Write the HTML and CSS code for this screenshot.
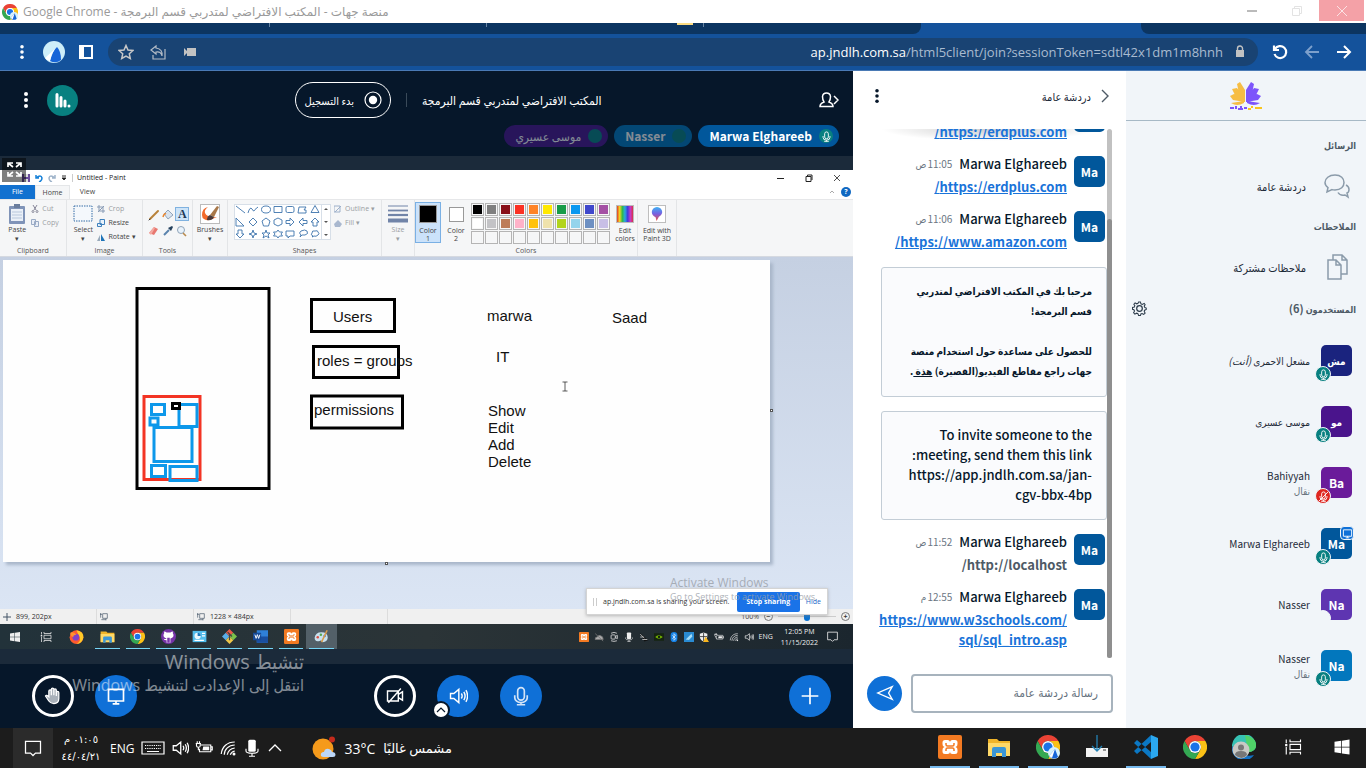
FILE: index.html
```html
<!DOCTYPE html>
<html lang="ar">
<head>
<meta charset="utf-8">
<title>منصة جهات - المكتب الافتراضي لمتدربي قسم البرمجة</title>
<link rel="stylesheet" href="styles.css">
</head>
<body>
<svg class="defs" aria-hidden="true">
  <symbol id="chrome" viewBox="0 0 24 24"><path fill="#ea4335" d="M1.6 6A12 12 0 0 1 22.4 6H12a6 6 0 0 0-5.2 9z"/><path fill="#fbc116" d="M22.4 6A12 12 0 0 1 12 24l5.2-9A6 6 0 0 0 12 6z"/><path fill="#34a853" d="M12 24A12 12 0 0 1 1.6 6l5.2 9a6 6 0 0 0 10.4 0z"/><circle cx="12" cy="12" r="6" fill="#fff"/><circle cx="12" cy="12" r="4.600" fill="#1a73e8"/></symbol>
  <symbol id="chrome-profile" viewBox="0 0 24 24"><use href="#chrome"/><circle cx="18" cy="18" r="6" fill="#d7f1fb"/><path d="M13 21l6-7 3 8a6 6 0 0 1-8 0z" fill="#1765d8"/><path d="M13 21l6-7-3 9z" fill="#fff"/></symbol>
  <symbol id="xampp" viewBox="0 0 24 24"><rect width="24" height="24" rx="2" fill="#f37a22"/><path d="M7 5h2.500a2.500 2.500 0 0 1 2.500 2.500A2.500 2.500 0 0 1 14.500 5H17a2.500 2.500 0 0 1 2.500 2.500V9a3 3 0 0 1-2 3 3 3 0 0 1 2 3v1.500A2.500 2.500 0 0 1 17 19h-2.500a2.500 2.500 0 0 1-2.500-2.500A2.500 2.500 0 0 1 9.500 19H7a2.500 2.500 0 0 1-2.500-2.500V15a3 3 0 0 1 2-3 3 3 0 0 1-2-3V7.500A2.500 2.500 0 0 1 7 5z" fill="#fff"/><path d="M8 8v1.500q0 1.500 1.500 1.500h5Q16 11 16 9.500V8M8 16v-1.500Q8 13 9.500 13h5q1.500 0 1.500 1.500V16" stroke="#f37a22" stroke-width="1.500" fill="none"/></symbol>
  <symbol id="folder" viewBox="0 0 24 24"><path d="M1 4h9l2 2h11v15H1z" fill="#f0b429"/><path d="M1 8h22v13H1z" fill="#ffd968"/><path d="M5 22v-8q0-2 2-2h10q2 0 2 2v8h-4v-4H9v4z" fill="#3b96d6"/></symbol>
  <symbol id="windows" viewBox="0 0 24 24"><path fill="currentColor" d="M2 5l9-1.300v7.800H2zM12 3.600L22 2v9.500H12zM2 12.500h9v7.800L2 19zM12 12.500h10V22l-10-1.500z"/></symbol>
  <symbol id="taskview" viewBox="0 0 24 24"><g fill="none" stroke="currentColor" stroke-width="1.500"><path d="M8 2v3h14V2M8 22v-3h14v3M8 8.500h14v7H8zM3 2v5M3 12v10"/><path d="M1.500 9.500h3" stroke-width="3"/></g></symbol>
  <symbol id="note" viewBox="0 0 24 24"><path d="M3 4h18v14h-6l-3 3-3-3H3z" fill="none" stroke="currentColor" stroke-width="1.500"/></symbol>
  <symbol id="wifi" viewBox="0 0 24 24"><g fill="none" stroke="currentColor" stroke-width="1.600"><path d="M3 20C4 10 11 4 21 4M7 21c0-7 6-13 14-13M11 21c1-5 4-8 10-9M15 21c1-3 2-4 6-5"/></g><circle cx="20" cy="20" r="2" fill="currentColor"/></symbol>
  <symbol id="speaker" viewBox="0 0 24 24"><path d="M3 9h4l6-5v16l-6-5H3zM16 9q2 3 0 6M19 7q3 5 0 10M21.500 5q4 7 0 14" fill="none" stroke="currentColor" stroke-width="1.700"/></symbol>
  <symbol id="mic" viewBox="0 0 24 24"><g fill="none" stroke="currentColor" stroke-width="2"><rect x="8" y="2" width="8" height="15" rx="4"/><path d="M4.500 11v3a7.500 6 0 0 0 15 0v-3M12 20v2.500M7 22.500h10"/></g></symbol>
  <symbol id="mic-solid" viewBox="0 0 24 24"><rect x="7" y="1" width="10" height="16" rx="2" fill="currentColor"/><path d="M4 13v3q0 3 8 3t8-3v-3M12 19v4M8 23h8" fill="none" stroke="currentColor" stroke-width="1.500"/></symbol>
  <symbol id="dots" viewBox="0 0 6 18"><g fill="currentColor"><circle cx="3" cy="3" r="2"/><circle cx="3" cy="9" r="2"/><circle cx="3" cy="15" r="2"/></g></symbol>
  <symbol id="battery" viewBox="0 0 24 24"><path d="M8 8h13v9H6v-4M21 10.500h2v4h-2" fill="none" stroke="currentColor" stroke-width="1.500"/><path d="M11 10h8v5h-9z" fill="currentColor"/><path d="M1 6h7M2 6v3q0 2 2.500 2T7 9V6M3 3v3M6 3v3M4.500 11v4" fill="none" stroke="currentColor" stroke-width="1.500"/></symbol>
  <symbol id="screen" viewBox="0 0 24 24"><path d="M3 4h18v14H3zM8 21.500h8M12 18v3" fill="none" stroke="currentColor" stroke-width="2"/></symbol>
  <symbol id="size" viewBox="0 0 12 12"><path d="M4 1h7v7H4zM0 2h3M1 0v7M2 10h7M9 8v3" fill="none" stroke="#456" stroke-width="1"/></symbol>
</svg>

<header class="titlebar">
  <svg class="i16"><use href="#chrome-profile"/></svg>
  <span class="window-name" dir="rtl">منصة جهات - المكتب الافتراضي لمتدربي قسم البرمجة - Google Chrome</span>
  <button class="win-btn" aria-label="Minimize"><svg viewBox="0 0 10 10"><path d="M0 5h10" stroke="#777"/></svg></button>
  <button class="win-btn" aria-label="Restore"><svg viewBox="0 0 10 10"><path d="M.5 2.500h7v7h-7zM2.500 2V.5h7v7H8" fill="none" stroke="#e3e3e3"/></svg></button>
  <button class="win-btn close" aria-label="Close"><svg viewBox="0 0 10 10"><path d="M0 0l10 10M10 0L0 10" stroke="#fbe3e5"/></svg></button>
</header>
<div class="tabstrip"><div class="tabs-left"><i></i><i></i><i></i></div><div class="tabs-right"></div></div>
<nav class="addressbar">
  <button aria-label="Menu" class="bar-btn"><svg class="i16"><use href="#dots"/></svg></button>
  <button aria-label="Profile" class="bar-btn"><svg class="i22" viewBox="0 0 22 22"><circle cx="11" cy="11" r="11" fill="#cdeef9"/><path d="M7 20Q10 9 14 6q4 4 4 13-5 4-11 1z" fill="#1765d8"/><path d="M2 17L14 6Q9 10 7 20q-4-1-5-3z" fill="#fff"/></svg></button>
  <button aria-label="Side panel" class="bar-btn"><svg class="i16" viewBox="0 0 16 16"><path d="M1 1h14v14H1zM6 3v10h7V3z" fill="#fff" fill-rule="evenodd"/></svg></button>
  <div class="omnibox">
    <svg class="i16" viewBox="0 0 16 16"><path d="M8 1.500l2 4.500 5 .5-3.700 3.300 1 4.700L8 12l-4.300 2.500 1-4.700L1 6.500 6 6z" fill="none" stroke="#c8c8c8" stroke-width="1.500"/></svg>
    <svg class="i16" viewBox="0 0 16 16"><path d="M6 2L1 6l5 4V8q5-1 6 4 1-7-6-8zM3 11v4h12V5" fill="none" stroke="#b4bcc6" stroke-width="1.200"/></svg>
    <svg class="i16" viewBox="0 0 16 16"><path d="M5 4h9v8H5zM2 4l3 3v2l-3 3z" fill="#c2c2c2"/></svg>
    <span class="url"><b>ap.jndlh.com.sa</b>/html5client/join?sessionToken=sdtl42x1dm1m8hnh</span>
    <svg class="i16" viewBox="0 0 16 16"><path d="M4 6h8v7H4z" fill="#c2c2c2"/><path d="M5.500 7V4.500a2.500 2.500 0 0 1 5 0V7" fill="none" stroke="#c2c2c2" stroke-width="1.400"/></svg>
  </div>
  <button aria-label="Reload" class="bar-btn"><svg class="i16" viewBox="0 0 16 16"><path d="M3 5a6 6 0 1 1-.5 5M2 1.500V6h5" fill="none" stroke="#fff" stroke-width="2.200"/></svg></button>
  <button aria-label="Forward" class="bar-btn"><svg class="i16" viewBox="0 0 16 16"><path d="M15 8H2M8 2L2 8l6 6" fill="none" stroke="#7da0cc" stroke-width="1.800"/></svg></button>
  <button aria-label="Back" class="bar-btn"><svg class="i16" viewBox="0 0 16 16"><path d="M1 8h13M8 2l6 6-6 6" fill="none" stroke="#fff" stroke-width="2"/></svg></button>
</nav>

<main class="app">
  <section class="stage">
    <div class="stage-head">
      <div class="head-row">
        <div class="head-left">
          <button aria-label="Options"><svg class="i18"><use href="#dots"/></svg></button>
          <button class="stats" aria-label="Connection"><svg viewBox="0 0 31 31"><path d="M10 9.500v11.500M14 12.500v8.500M18 16v5M22 21v0" stroke="#fff" stroke-width="3" stroke-linecap="round"/></svg></button>
        </div>
        <div class="head-mid">
          <button class="record"><span dir="rtl">بدء التسجيل</span><svg viewBox="0 0 18 18"><circle cx="9" cy="9" r="8" fill="none" stroke="#fff" stroke-width="1.200"/><circle cx="9" cy="9" r="4.200" fill="#fff"/></svg></button>
          <span class="sep"></span>
          <h1 dir="rtl">المكتب الافتراضي لمتدربي قسم البرمجة</h1>
        </div>
        <button aria-label="Users"><svg class="i20" viewBox="0 0 20 20"><path d="M1 16.500q0-3 4-4.500Q3.500 10 3.500 6.500 4 3 7.500 3t4 3.500Q11.500 10 10 12q4 1.500 4 4.500zM15 6l4 4-4 4" fill="none" stroke="#fff" stroke-width="1.500"/></svg></button>
      </div>
      <div class="talkers">
        <span class="pill purple dim"><span dir="rtl" class="ar">موسى عسيري</span><i></i></span>
        <span class="pill sky dim">Nasser<i></i></span>
        <span class="pill blue">Marwa Elghareeb<i><svg><use href="#mic"/></svg></i></span>
      </div>
    </div>

    <div class="share-area">
      <div class="share">
        <div class="p-title">
          <svg class="fullscreen" viewBox="0 0 24 24"><rect width="24" height="24" fill="#000" opacity=".5"/><g fill="none" stroke="#fff" stroke-width="1.700"><path d="M6 9V5h5M6 5l5 4M19 9V5h-5M19 5l-5 4M6 14v4h5M6 18l5-4M19 14v4h-5M19 18l-5-4"/></g></svg>
          <svg class="save" viewBox="0 0 8 8"><path d="M0 0h8v8H0z" fill="#6a4c9c"/><path d="M2 0h4v3H2zM2 5h4v3H2z" fill="#ddd"/></svg>
          <svg viewBox="0 0 8 8"><path d="M1 1v3h3M1 4q5-4 6 0 0 3-3 4" fill="none" stroke="#1681d8" stroke-width="1.500"/></svg>
          <svg viewBox="0 0 8 8"><path d="M7 1v3H4M7 4Q2 0 1 4q0 3 3 4" fill="none" stroke="#9fb4ca" stroke-width="1.500"/></svg>
          <svg class="i6" viewBox="0 0 6 6"><path d="M1 1h4M1 3h4L3 5z" stroke="#333"/></svg>
          <span class="p-name">Untitled - Paint</span>
          <button aria-label="Minimize"><svg viewBox="0 0 8 8"><path d="M0 4.500h7" stroke="#222"/></svg></button>
          <button aria-label="Restore"><svg viewBox="0 0 8 8"><path d="M1 2.500h5v5H1zM2.500 2V1H7v5" fill="none" stroke="#222"/></svg></button>
          <button aria-label="Close"><svg viewBox="0 0 8 8"><path d="M1 1l6 6M7 1L1 7" stroke="#222" stroke-width=".8"/></svg></button>
        </div>
        <div class="p-tabs">
          <button class="file">File</button><button class="home">Home</button><button>View</button>
          <span class="help"><svg viewBox="0 0 8 8"><path d="M2 5l2-2 2 2" fill="none" stroke="#aaa"/></svg><b>?</b></span>
        </div>
        <div class="ribbon">
          <div class="group clip"><div class="body">
            <button class="big"><svg viewBox="0 0 18 20"><rect x="1" y="2" width="16" height="18" rx="1" fill="#8094b8"/><path d="M3 5h12v12H3z" fill="#eaf0f8"/><path d="M6 0h6v4H6z" fill="#6a7d9d"/><path d="M4 8h10M4 11h10M4 14h10" stroke="#b8c7dc"/></svg>Paste<em>▾</em></button>
            <div class="stack muted"><button><svg viewBox="0 0 8 8"><path d="M2 0l3 5M6 0L3 5" stroke="#889"/><circle cx="2" cy="6.500" r="1" fill="none" stroke="#889"/><circle cx="6" cy="6.500" r="1" fill="none" stroke="#889"/></svg>Cut</button><button><svg viewBox="0 0 8 8"><path d="M.5.5h4v5h-4zM3.500 2.500h4v5h-4z" fill="#e9eef6" stroke="#9aabc5"/></svg>Copy</button></div>
          </div><p>Clipboard</p></div>
          <div class="group image"><div class="body">
            <button class="big"><svg viewBox="0 0 20 20"><rect x="1" y="2" width="18" height="15" fill="#f4f8fc" stroke="#356ca6" stroke-width="1" stroke-dasharray="1.500 1"/></svg>Select<em>▾</em></button>
            <div class="stack"><button class="muted"><svg viewBox="0 0 8 8"><path d="M2 0v6h6M0 2h6v6M1 7l6-6" fill="none" stroke="#889bb5"/></svg>Crop</button><button><svg viewBox="0 0 8 8"><path d="M3 .5h4.500v5H3zM.5 4.500h4v3h-4z" fill="#eaf3fb" stroke="#3f81bd"/></svg>Resize</button><button><svg viewBox="0 0 8 8"><path d="M0 8l3-6v6z" fill="#9ab"/><path d="M4 8V1l4 7z" fill="#1e74b8"/></svg>Rotate ▾</button></div>
          </div><p>Image</p></div>
          <div class="group tools"><div class="body"><svg viewBox="0 0 42 34">
            <g stroke-linecap="round"><path d="M3 12l8-8" stroke="#b8823a" stroke-width="2"/><path d="M2 13l1-1" stroke="#333"/></g>
            <path d="M17 7l4-4 5 5-5 4z" fill="#d8e3ef" stroke="#7b90ab" stroke-width=".8"/><path d="M16 10q1-4 3-3" fill="none" stroke="#e9842d" stroke-width="1.500"/>
            <rect x="28.500" y=".5" width="13" height="13" fill="#cde4f8" stroke="#80b2e0"/><text x="31" y="11" class="a-glyph">A</text>
            <path d="M2 26l5-6 4 2-4 6z" fill="#e87870"/><path d="M2 26l5-6 1 1-4 7z" fill="#f4aaa2"/>
            <path d="M17 28l5-5" stroke="#5a83ad" stroke-width="2"/><path d="M21 21l3 3 2-4-1-1z" fill="#26425e"/>
            <circle cx="34" cy="23" r="3.500" fill="#e8f2fb" stroke="#8fa3b8"/><path d="M36 26l3 3" stroke="#b98a4c" stroke-width="1.600"/></svg></div><p>Tools</p></div>
          <div class="group brushes"><div class="body"><button class="big"><svg viewBox="0 0 20 20"><rect x=".5" y=".5" width="19" height="19" fill="#fff" stroke="#bbb"/><path d="M2 11q0-7 6-8-4 3-3 6 2 5 12 4-10 5-13 2-2-1-2-4z" fill="#f26a2c"/><path d="M10 11l7-9 2 1-5 10z" fill="#a97849"/><path d="M7 16q0-4 3-5l4 2q-2 4-7 3z" fill="#4a3a3a"/></svg>Brushes<em>▾</em></button></div><p></p></div>
          <div class="group shapes"><div class="body"><svg class="shape-grid" viewBox="0 0 97 36"><rect x=".5" y=".5" width="96" height="35" fill="#fff" stroke="#d7dfe8"/><path d="M87.500 0v36" stroke="#d7dfe8"/>
            <g fill="none" stroke="#3d74ad" stroke-width=".9"><path d="M2 2l9 7M14 9q2-7 4-4t2 2 4-4M40 2.500h8v6h-8zM64 9l1-6h7l-2 3h2v3zM77 8.500h8l-4-7z"/><ellipse cx="32" cy="5.500" rx="4.500" ry="3.500"/><rect x="52" y="2.500" width="8" height="6" rx="1.500"/>
            <path d="M2 14v8h8zM19 14l4 4-4 4-4-4zM32 14l4 3-1.500 5h-5L28 17zM44 14l4 2v4l-4 2-4-2v-4zM52 16.500h4V14l4 4-4 4v-2.500h-4zM73 16.500h-4V14l-4 4 4 4v-2.500h4zM81 14l4 4h-2v4h-4v-4h-2z"/>
            <path d="M4 26h4v4h2l-4 4-4-4h2zM19 26l1 3 3 1-3 1-1 3-1-3-3-1 3-1zM32 26l1 3h3l-2 2 1 3-3-2-3 2 1-3-2-2h3zM44 26l1.500 2h3L47 30l1.500 2h-3L44 34l-1.500-2h-3l1.500-2-1.500-2h3zM52 27h8v5h-4l-2 2v-2h-2zM66 33l1-2q-3-2 0-4 4-2 6 0 2 3-2 4h-3zM78 33l1-1q-3-1-1-3 0-3 3-2 3-1 3 1 2 2 0 3-2 2-4 1z"/></g><path d="M90 6h4l-2-2zM90 17h4l-2 2zM90 28h4M90 30h4l-2 2z" fill="#555"/></svg>
            <div class="stack muted"><button><svg viewBox="0 0 8 8"><path d="M0 1h6v6H0zM1 7l6-6" fill="none" stroke="#9db0ca"/></svg>Outline ▾</button><button><svg viewBox="0 0 8 8"><path d="M0 5l4-4 4 4-2 3H1z" fill="#a9b8cf"/></svg>Fill ▾</button></div></div><p>Shapes</p></div>
          <div class="group size"><div class="body"><button class="big muted"><svg viewBox="0 0 20 18"><path d="M0 1h20" stroke="#7184a8" stroke-width="1"/><path d="M0 5.500h20" stroke="#7184a8" stroke-width="1.800"/><path d="M0 10h20" stroke="#7184a8" stroke-width="2.200"/><path d="M0 15.500h20" stroke="#7184a8" stroke-width="4"/></svg>Size<em>▾</em></button></div><p></p></div>
          <div class="group colors"><div class="body">
            <button class="swatch on"><i></i>Color<br>1</button><button class="swatch two"><i></i>Color<br>2</button>
            <div class="palette"><i></i><i></i><i></i><i></i><i></i><i></i><i></i><i></i><i></i><i></i><i></i><i></i><i></i><i></i><i></i><i></i><i></i><i></i><i></i><i></i><i></i><i></i><i></i><i></i><i></i><i></i><i></i><i></i><i></i><i></i></div>
            <button class="swatch edit"><i></i>Edit<br>colors</button></div><p>Colors</p></div>
          <div class="group p3d"><div class="body"><button class="swatch three"><svg viewBox="0 0 19 19"><defs><linearGradient id="drop" x1="0" y1="0" x2="0" y2="1"><stop offset="0" stop-color="#3cb4f4"/><stop offset=".5" stop-color="#7a5ee0"/><stop offset="1" stop-color="#f6503c"/></linearGradient></defs><rect x=".5" y=".5" width="18" height="18" fill="#fff" stroke="#bbb"/><path d="M4 7.500a5.500 5.500 0 0 1 11 0q0 3-3.500 5L9 17l-1-4Q4 11 4 7.500z" fill="url(#drop)"/></svg>Edit with<br>Paint 3D</button></div><p></p></div>
        </div>
        <div class="canvas">
          <svg class="paper" viewBox="0 0 767 302">
            <rect width="767" height="302" fill="#fefefe"/>
            <g fill="none" stroke="#000" stroke-width="3"><rect x="134" y="28.500" width="132" height="200"/><rect x="308.500" y="39.500" width="83" height="32"/><rect x="310.500" y="86.500" width="85" height="31"/><rect x="308.500" y="136" width="91" height="32"/></g>
            <rect x="141" y="136.500" width="56" height="83" fill="none" stroke="#f33424" stroke-width="3"/>
            <g fill="none" stroke="#0d98ea" stroke-width="3"><rect x="148.500" y="144.500" width="13" height="10"/><rect x="147" y="158" width="8" height="7"/><rect x="176" y="144.500" width="18" height="22"/><rect x="151" y="167.500" width="38" height="34"/><rect x="148.500" y="205.500" width="14" height="11"/><rect x="167" y="206.500" width="27" height="14"/></g>
            <path d="M169.500 143.500h7v5h-7z" fill="#fff" stroke="#000" stroke-width="3"/>
            <g class="notes"><text x="330" y="62">Users</text><text x="314" y="106">roles = groups</text><text x="311" y="155">permissions</text><text x="484" y="61">marwa</text><text x="493" y="102">IT</text><text x="609" y="63">Saad</text><text x="485" y="156">Show</text><text x="485" y="173">Edit</text><text x="485" y="190">Add</text><text x="485" y="207">Delete</text></g>
            <path d="M559.500 122h5M562 122v9M559.500 131h5" stroke="#333" stroke-width=".8" fill="none"/>
          </svg>
          <i class="grip right"></i><i class="grip bottom"></i>
        </div>
        <div class="status">
          <span><svg viewBox="0 0 8 8"><path d="M4 0v8M0 4h8" stroke="#456"/></svg>899, 202px</span><span><svg><use href="#size"/></svg></span><span><svg><use href="#size"/></svg>1228 × 484px</span><span></span>
          <label class="zoom" for="zoom">100% <b>−</b><input id="zoom" type="range"><b>+</b></label>
        </div>
        <div class="mini-bar">
          <div class="mini-apps">
            <button aria-label="Start"><svg><use href="#windows"/></svg></button>
            <button aria-label="Task view"><svg><use href="#taskview"/></svg></button>
            <button aria-label="Firefox"><svg viewBox="0 0 24 24"><circle cx="12" cy="13" r="11" fill="#ff5b2e"/><path d="M12 2q12 2 11 12-2 9-11 10Q22 18 15 9z" fill="#ffca28"/><circle cx="11" cy="13" r="5.500" fill="#8040c8"/><path d="M2 6q5-3 10 3-6 0-5 4-5-1-5-7z" fill="#ff9130"/></svg></button>
            <button class="run" aria-label="Files"><svg><use href="#folder"/></svg></button>
            <button class="run" aria-label="Chrome"><svg><use href="#chrome"/></svg></button>
            <button class="run" aria-label="GitHub"><svg viewBox="0 0 24 24"><circle cx="12" cy="12" r="12" fill="#7633a8"/><path d="M9 22v-4q-4 0-5-3 3 2 5 0-5-1-5-5 0-2 1-3V4q2 0 4 1.500h6Q17 4 19 4v3q1 1 1 3 0 4-5 5v7z" fill="#fff"/><path d="M10 22v-8h4v8z" fill="#7633a8"/></svg></button>
            <button class="run" aria-label="Control"><svg viewBox="0 0 24 24"><rect x="1" y="3" width="22" height="18" fill="#52bdec"/><circle cx="9" cy="11" r="5" fill="#e9f7fd"/><path d="M16 7h5M16 11h5M4 18h15" stroke="#fff" stroke-width="2"/><path d="M9 11V6a5 5 0 0 1 5 5z" fill="#1c78bc"/></svg></button>
            <button class="run" aria-label="Git"><svg viewBox="0 0 24 24"><path d="M12 0l6 6-6 6-6-6z" fill="#ee5b49"/><path d="M6 6l6 6-6 6-6-6z" fill="#59aee9"/><path d="M18 6l6 6-6 6-6-6z" fill="#7cc24a"/><path d="M12 12l6 6-6 6-6-6z" fill="#f0c84a"/><path d="M9 5l7 7M12 8v10" stroke="#444" stroke-width="2"/></svg></button>
            <button class="run" aria-label="Word"><svg viewBox="0 0 24 24"><path d="M6 2h18v20H6z" fill="#2f80d8"/><path d="M6 12h18v10H6z" fill="#1a4fa0"/><path d="M0 6h13v12H0z" fill="#164a96"/><path d="M3 9l2 6 2-6 2 6 2-6" fill="none" stroke="#fff" stroke-width="1.500"/></svg></button>
            <button class="run" aria-label="XAMPP"><svg><use href="#xampp"/></svg></button>
            <button class="run active" aria-label="Paint"><svg viewBox="0 0 24 24"><path d="M1 14Q2 5 12 5t10 9q-1 7-8 7-2-4-5-2-8 2-8-5z" fill="#c8e0ee"/><circle cx="6" cy="13" r="2" fill="#d94f44"/><circle cx="11" cy="9" r="2" fill="#56a84e"/><circle cx="17" cy="11" r="2" fill="#3f79d0"/><path d="M12 21L21 2" stroke="#d79a4b" stroke-width="2.500"/></svg></button>
          </div>
          <div class="mini-tray">
            <svg><use href="#xampp"/></svg>
            <svg viewBox="0 0 24 24"><path d="M3 18q-1-6 5-6 3-6 8-3 6 1 6 9zM3 4l19 18" fill="#aaa" stroke="#777" stroke-width="2"/></svg>
            <svg viewBox="0 0 24 24"><rect x="5" y="7" width="10" height="10" rx="2" fill="none" stroke="#ddd" stroke-width="2"/><path d="M15 11l5-3v8l-5-3M5 3q7-4 14 0M5 21q7 3 14 0" fill="none" stroke="#ddd" stroke-width="2"/></svg>
            <svg><use href="#mic-solid"/></svg>
            <svg viewBox="0 0 24 24"><path d="M2 2l20 18-9 3-3-7z" fill="#111"/><path d="M3 5l10 10M8 18h12M3 12h8" stroke="#ccc" stroke-width="2"/></svg>
            <svg viewBox="0 0 24 24"><rect y="3" width="24" height="18" fill="#162412"/><path d="M3 12q8-9 18 0-9 8-18 0z" fill="#76b900"/><circle cx="12" cy="12" r="3" fill="#162412"/></svg>
            <svg viewBox="0 0 24 24"><rect x="4" width="16" height="24" rx="8" fill="#1683e8"/><path d="M8 8l8 8-4 4V4l4 4-8 8" fill="none" stroke="#fff" stroke-width="1.500"/></svg>
            <svg viewBox="0 0 24 24"><rect width="24" height="24" fill="#2a8bd2"/><path d="M4 18L18 4l2 7-8 8z" fill="#a5dcf7"/></svg>
            <svg viewBox="0 0 24 24"><path d="M2 4l9-3 9 3v8q-2 8-9 11Q3 20 2 12z" fill="#eee"/><path d="M11 2v20M2 11h18" stroke="#333" stroke-width="2"/><path d="M16 11l8 13H10z" fill="#f8b51d"/></svg>
            <svg><use href="#battery"/></svg><svg><use href="#wifi"/></svg><svg><use href="#speaker"/></svg>
            <span>ENG</span><span class="mini-clock">12:05 PM<br>11/15/2022</span><svg class="mini-note"><use href="#note"/></svg>
          </div>
        </div>
        <div class="sharing"><span class="bars"></span><span class="msg">ap.jndlh.com.sa is sharing your screen.</span><button>Stop sharing</button><a href="#">Hide</a></div>
        <p class="activate-en">Activate Windows<small>Go to Settings to activate Windows.</small></p>
      </div>
    </div>

    <div class="actions">
      <div class="act left">
        <button class="ring" aria-label="Raise hand"><svg viewBox="0 0 24 24"><path d="M7 13V6q0-1.500 1.500-1.500T10 6v5V4q0-1.500 1.500-1.500T13 4v7V5q0-1.500 1.500-1.500T16 5v7V8q0-1.500 1.500-1.500T19 8v7q0 6-6 6-4 0-6-3l-4-6q1-2 4 1z" fill="#a9b1ba" stroke="#fff" stroke-width="1.500"/></svg></button>
        <button aria-label="Share screen"><svg><use href="#screen"/></svg></button>
      </div>
      <div class="act mid">
        <button class="ring" aria-label="Camera off"><svg viewBox="0 0 24 24"><path d="M3 6h13v12H3zM16 10l5-3v10l-5-3M4 20L19 3" fill="none" stroke="#fff" stroke-width="1.700"/></svg></button>
        <button class="audio" aria-label="Audio"><svg><use href="#speaker"/></svg><span class="caret"><svg viewBox="0 0 10 10"><path d="M1 7l4-4 4 4" fill="none" stroke="#06172a" stroke-width="1.200"/></svg></span></button>
        <button class="mic" aria-label="Microphone"><svg><use href="#mic"/></svg></button>
      </div>
      <div class="act right"><button aria-label="Actions"><svg viewBox="0 0 24 24"><path d="M12 2v20M2 12h20" stroke="#fff" stroke-width="2"/></svg></button></div>
      <p class="activate-ar" dir="rtl">تنشيط Windows<small>انتقل إلى الإعدادت لتنشيط Windows</small></p>
    </div>
  </section>

  <section class="chat" dir="rtl">
    <div class="chat-head"><svg viewBox="0 0 10 14"><path d="M2 1l6 6-6 6" fill="none" stroke="#4e5a66" stroke-width="1.400"/></svg><h2>دردشة عامة</h2><button aria-label="Options"><svg class="i16"><use href="#dots"/></svg></button></div>
    <div class="chat-body">
      <div class="list">
        <article><span class="ava">Ma</span><div><a href="#">https://erdplus.com/</a></div></article>
        <article><span class="ava">Ma</span><div><h3><span>Marwa Elghareeb</span><time>11:05<i>ص</i></time></h3><a href="#">https://erdplus.com/</a></div></article>
        <article><span class="ava">Ma</span><div><h3><span>Marwa Elghareeb</span><time>11:06<i>ص</i></time></h3><a href="#">https://www.amazon.com/</a></div></article>
        <div class="box ar">مرحبا بك في المكتب الافتراضي لمتدربي<br>قسم البرمجة!<br><br>للحصول على مساعدة حول استخدام منصة<br>جهات راجع مقاطع الفيديو(القصيرة) <a href="#">هذة </a>.</div>
        <div class="box">To invite someone to the<br>meeting, send them this link:<br>https://app.jndlh.com.sa/jan-cgv-bbx-4bp</div>
        <article><span class="ava">Ma</span><div><h3><span>Marwa Elghareeb</span><time>11:52<i>ص</i></time></h3><span class="plain">http://localhost/</span></div></article>
        <article><span class="ava">Ma</span><div><h3><span>Marwa Elghareeb</span><time>12:55<i>م</i></time></h3><a href="#">https://www.w3schools.com/<wbr>sql/sql_intro.asp</a></div></article>
      </div>
      <div class="scroll"><i></i></div>
    </div>
    <form class="composer"><input type="text" aria-label="رسالة دردشة عامة" placeholder="رسالة دردشة عامة"><button type="button" aria-label="إرسال"><svg viewBox="0 0 20 20"><path d="M18 3L2 10l16 7-4-7z" fill="none" stroke="#fff" stroke-width="1.500"/></svg></button></form>
  </section>

  <aside class="side" dir="rtl">
    <div class="brand"><svg viewBox="0 0 34 30"><g fill="#f6bd45"><path d="M16 21L10 12 8 3l3-2 5 8zM16 21L6 14 3 8l5-1 8 11zM16 21L4 19l-3-4 4-2 10 5zM2 22l13-2v2Q8 26 2 22z"/></g><g fill="#7d55fb"><path d="M17 21l6-9 2-9-3-2-5 8zM17 21l10-7 3-6-5-1-8 11zM17 21l12-2 3-4-4-2-10 5zM31 22l-13-2v2q7 4 13 0z"/></g><path d="M1 27h4M7 28v-3M9 28h5M12 25v3M15 27h3" stroke="#7d55fb" stroke-width="2"/><path d="M19 28h3M22 26h2M26 27h7" stroke="#f8c51f" stroke-width="2"/></svg></div>
    <h2>الرسائل</h2>
    <a class="nav" href="#"><svg viewBox="0 0 26 26"><path d="M11 2c6 0 9 3.500 9 7.500S17 17 11 17q-2 0-3-.4L3 19l1-4.500q-3-2-3-5C1 5.500 5 2 11 2zM22 12q3 1.500 3 4.500T23 20l1 4-3-2q-5 1-7-2.500" fill="none" stroke="#8b9baa" stroke-width="1.500"/></svg><span>دردشة عامة</span></a>
    <h2>الملاحظات</h2>
    <a class="nav" href="#"><svg viewBox="0 0 26 26"><path d="M4 6h8l5 5v14H4zM12 6v5h5M9 6V1h9l5 5v14h-6M18 1v5h5" fill="none" stroke="#8b9baa" stroke-width="1.500"/></svg><span>ملاحظات مشتركة</span></a>
    <div class="users-head"><h2>المستخدمون <span class="lat">(6)</span></h2><button aria-label="Settings"><svg viewBox="0 0 16 16"><circle cx="8" cy="8" r="3" fill="none" stroke="#2c3b4a" stroke-width="1.300"/><path d="M7 1h2l.5 2 1.500.7L13 2.500 14 4l-1 1.500.7 1.500 1.500.5v1.500l-1.700.8-.5 1.200 1 2-1.500 1.300-1.800-1-1.200.5L9 15.500H7l-.7-2-1.300-.5-2 1L1.700 12.500l1-1.800L2 9.300.5 8.800v-2L2.500 6.500 3 5 2 3.500 3.300 2 5 3l1.400-.5z" fill="none" stroke="#2c3b4a" stroke-width="1.100"/></svg></button></div>
    <ul class="users">
      <li><span class="ava navy"><b class="ar">مش</b><i class="badge"><svg><use href="#mic"/></svg></i></span><div class="ar">مشعل الاحمرى <em>(أنت)</em></div></li>
      <li><span class="ava violet"><b class="ar">مو</b><i class="badge"><svg><use href="#mic"/></svg></i></span><div class="ar">موسى عسيرى</div></li>
      <li><span class="ava grape">Ba<i class="badge red"><svg><use href="#mic"/></svg><svg class="slash" viewBox="0 0 24 24"><path d="M2 22L22 2" stroke="#fff" stroke-width="2"/></svg></i></span><div>Bahiyyah<small>نقال</small></div></li>
      <li><span class="ava">Ma<i class="badge"><svg><use href="#mic"/></svg></i><i class="badge top"><svg><use href="#screen"/></svg></i></span><div>Marwa Elghareeb</div></li>
      <li><span class="ava iris">Na<i class="badge none"></i></span><div>Nasser</div></li>
      <li><span class="ava azure">Na<i class="badge"><svg><use href="#mic"/></svg></i></span><div>Nasser<small>نقال</small></div></li>
    </ul>
  </aside>
</main>

<footer class="taskbar">
  <button class="notif" aria-label="Notifications"><svg><use href="#note"/></svg></button>
  <time dir="rtl">٠١:٠٥ م<br>٤٤/٠٤/٢١</time>
  <span class="lang">ENG</span>
  <svg class="kbd" viewBox="0 0 24 14"><path d="M1 1h22v12H1z" fill="none" stroke="#fff" stroke-width="1.200"/><path d="M4 4.500h16M4 7.500h16" stroke="#fff" stroke-dasharray="1.200 1"/><path d="M6 10.500h12" stroke="#fff"/></svg>
  <svg class="i18"><use href="#speaker"/></svg><svg class="i18"><use href="#battery"/></svg><svg class="i18"><use href="#wifi"/></svg><svg class="i18"><use href="#mic-solid"/></svg>
  <svg class="i16" viewBox="0 0 16 16"><path d="M2 11l6-6 6 6" fill="none" stroke="#fff" stroke-width="1.300"/></svg>
  <div class="weather"><svg viewBox="0 0 24 24"><circle cx="11" cy="13" r="10.500" fill="#f59a1b"/><circle cx="20" cy="3.500" r="3" fill="#c42b1c"/><path d="M12 21q-4 0-3-3.500 1-2 3-1.500 1-4 5-3 3 1 3 3 3.500 0 3.500 3 0 2-2.500 2z" fill="#bcd7f8"/></svg><span>33°C</span><span dir="rtl" class="ar">مشمس غالبًا</span></div>
  <div class="apps">
    <button class="run" aria-label="XAMPP"><svg><use href="#xampp"/></svg></button>
    <button class="run" aria-label="Files"><svg><use href="#folder"/></svg></button>
    <button class="run" aria-label="Chrome profile"><svg><use href="#chrome-profile"/></svg></button>
    <button aria-label="Downloader"><svg viewBox="0 0 24 24"><path d="M1 13h22v9H1z" fill="#f3f3f3"/><path d="M18 15h3" stroke="#333"/><path d="M12 0v16M7 11l5 5 5-5" fill="none" stroke="#2482b4" stroke-width="1.300"/></svg></button>
    <button class="run" aria-label="Code"><svg viewBox="0 0 24 24"><path d="M17 0l7 3v18l-7 3z" fill="#2ba8f0"/><path d="M17 0L0 16l3 3L17 7zM17 24L0 8l3-3 14 12z" fill="#0b78c4"/></svg></button>
    <button aria-label="Chrome"><svg><use href="#chrome"/></svg></button>
    <button aria-label="Edge"><svg viewBox="0 0 24 24"><path d="M0 12A12 12 0 0 1 24 10q0 7-8 7-5-1-3-5-2-6-13 0z" fill="#37c2b4"/><path d="M0 12a12 12 0 0 0 22 8q-10 3-12-5-1-6-10-3z" fill="#1270c4"/><path d="M13 0q12 3 11 11 0 4-6 6-5 0-3-6z" fill="#50d268"/><circle cx="9" cy="15" r="8.500" fill="#c9c9c5"/><circle cx="9" cy="12.500" r="3" fill="#777"/><path d="M3 20q0-4 6-4t6 4q-5 6-12 0z" fill="#777"/></svg></button>
    <button aria-label="Task view"><svg><use href="#taskview"/></svg></button>
    <button aria-label="Start"><svg><use href="#windows"/></svg></button>
  </div>
</footer>
</body>
</html>
```
FILE: styles.css
```css
* { box-sizing: border-box; }
html, body { height: 100%; }
body {
  margin: 0; display: flex; flex-direction: column; overflow: hidden;
  font-family: "Noto Sans CJK SC", "DejaVu Sans Condensed", "DejaVu Sans", sans-serif;
  font-size: 12px; line-height: 20px; color: #06172a; background: #1c1c1c;
}
button { border: 0; padding: 0; margin: 0; background: none; font: inherit; color: inherit; display: flex; align-items: center; justify-content: center; }
h1, h2, h3, p, ul { margin: 0; padding: 0; font-weight: 400; list-style: none; }
svg { display: block; flex: none; width: 12px; height: 12px; }
.defs { position: absolute; width: 0; height: 0; }
i { font-style: normal; }
.i16 { width: 16px; height: 16px; }
.i18 { width: 18px; height: 18px; }
.i20 { width: 20px; height: 20px; }
.i22 { width: 22px; height: 22px; }

/* browser frame */
.titlebar { flex: none; height: 23px; background: #fff; display: flex; align-items: center; padding-left: 2px; }
.window-name { padding-left: 5px; color: #9a9a9a; font: 12px/20px "Open Sans", "DejaVu Sans", sans-serif; }
.titlebar .win-btn:first-of-type { margin-left: auto; }
.win-btn { width: 45px; height: 21px; align-self: flex-start; }
.win-btn svg { width: 10px; height: 10px; }
.win-btn.close { background: #f4a1a7; margin-right: 2px; }
.tabstrip { flex: none; height: 11px; background: #14529b; display: flex; justify-content: space-between; }
.tabs-left { width: 67.400%; background: #0c3561; border-bottom-right-radius: 8px; display: flex; }
.tabs-left i { height: 4px; width: 217px; border-right: 1px solid #6785a5; }
.tabs-left i:first-child { width: 270px; }
.tabs-left i:nth-child(3) { display: flex; justify-content: flex-end; padding-right: 10px; }
.tabs-left i:nth-child(3)::after { content: ""; width: 16px; height: 2px; background: #fcdc82; }
.tabs-right { width: 16.500%; background: #0c3561; border-bottom-left-radius: 8px; }
.addressbar { flex: none; height: 37px; background: #14529b; border-bottom: 1px solid #4a7ab5; display: flex; align-items: center; padding: 0 6px; color: #fff; }
.bar-btn { width: 32px; height: 32px; }
.omnibox { flex: 1; height: 28px; border-radius: 14px; background: #194373; margin: 0 6px; padding: 0 10px; display: flex; align-items: center; gap: 16px; }
.url { flex: 1; text-align: right; color: #a9bbd0; font: 13px/20px "Open Sans", sans-serif; }
.omnibox .url + svg { margin-left: -7px; }
.url b { font-weight: 400; color: #fff; }

/* layout */
.app { flex: 1; min-height: 0; display: flex; background: #fff; }
.stage { flex: 1; min-width: 0; display: flex; flex-direction: column; background: #06172a; color: #fff; }
.chat { flex: 0 0 273px; min-width: 0; display: flex; flex-direction: column; background: #fff; }
.side { flex: 0 0 240px; background: #f1f5f9; }

.stage-head { flex: none; height: 85px; padding: 11px 14px 0; }
.head-row { display: flex; justify-content: space-between; align-items: center; height: 36px; }
.head-left { display: flex; align-items: center; gap: 12px; padding-left: 3px; }
.stats { width: 31px; height: 31px; border-radius: 50%; background: #088080; }
.stats svg { width: 31px; height: 31px; }
.head-mid { display: flex; align-items: center; gap: 15px; }
.record { height: 36px; border: 1px solid #fff; border-radius: 18px; padding: 0 8px; gap: 10px; font-size: 11px; }
.record svg { width: 18px; height: 18px; }
.sep { width: 1px; height: 14px; background: #3a4a59; }
.stage h1 { font-size: 12px; }
.talkers { display: flex; justify-content: flex-end; gap: 6px; margin-top: 7px; }
.pill { height: 22px; border-radius: 11px; padding: 0 6px 0 11px; display: flex; align-items: center; gap: 7px; font-weight: 700; }
.pill i { width: 14px; height: 14px; border-radius: 50%; background: #088080; display: flex; align-items: center; justify-content: center; }
.pill svg { width: 11px; height: 11px; }
.pill.dim { opacity: .5; }
.pill .ar { font-weight: 400; }
.purple { background: #4a148c; }
.sky { background: #0277bd; }
.blue { background: #01579b; }

/* shared screen */
.share-area { flex: 1; min-height: 0; background: #1b2a3a; padding: 14px 0 15px; }
.share { position: relative; height: 100%; display: flex; flex-direction: column; color: #444; background: #fff; font: 7px/8px "Open Sans", sans-serif; }
.share svg { width: 8px; height: 8px; }
.p-title { flex: none; height: 15px; display: flex; align-items: center; gap: 5px; padding: 0 12px 0 22px; color: #222; }
.share .fullscreen { position: absolute; left: 2px; top: -12px; width: 24px; height: 24px; }
.share .i6 { width: 6px; height: 6px; }
.p-name { flex: 1; border-left: 1px solid #ccc; padding-left: 4px; }
.p-title button { width: 8px; margin-left: 15px; }
.p-tabs { flex: none; height: 14px; display: flex; }
.p-tabs button { width: 35px; }
.p-tabs .file { background: #1271d0; color: #fff; }
.p-tabs .home { background: #f5f6f7; border: 1px solid #e4e6e8; border-bottom: 0; }
.help { margin-left: auto; display: flex; align-items: center; gap: 5px; padding-right: 2px; }
.help b { width: 10px; height: 10px; border-radius: 50%; background: #0f68c2; color: #fff; text-align: center; line-height: 10px; }
.ribbon { flex: none; height: 58px; background: #f5f6f7; border-top: 1px solid #e6e7e9; border-bottom: 1px solid #d5d9e0; display: flex; }
.group { border-right: 1px solid #e3e5e7; display: flex; flex-direction: column; }
.group .body { flex: 1; display: flex; padding-top: 4px; justify-content: center; align-items: flex-start; gap: 4px; }
.group p { text-align: center; height: 9px; color: #555; }
.clip { width: 67px; }
.image { width: 76px; }
.tools { width: 50px; }
.brushes { width: 35px; }
.shapes { width: 154px; }
.size { width: 33px; }
.colors { width: 223px; }
.p3d { width: 39px; }
.big { flex-direction: column; gap: 2px; }
.share .big svg { width: 20px; height: 20px; }
.big em { font-style: normal; line-height: 6px; }
.stack { display: flex; flex-direction: column; gap: 6px; align-items: flex-start; padding-top: 1px; }
.stack button { gap: 3px; white-space: nowrap; }
.muted { color: #9a9ea3; }
.share .tools svg { width: 42px; height: 34px; margin-top: 3px; }
.a-glyph { font: 700 12px "Liberation Serif", serif; fill: #1c3957; }
.share .shape-grid { width: 97px; height: 36px; }
.shapes .body { gap: 3px; }
.swatch { width: 24px; height: 41px; display: block; text-align: center; }
.swatch i, .share .swatch svg { display: block; width: 18px; height: 18px; margin: 2px auto 4px; }
.colors .body, .p3d .body { padding-top: 2px; gap: 3px; }
.swatch i { border: 1px solid #999; background: #000; }
.swatch.on { background: #cbe2fa; border: 1px solid #7ab0e4; width: 26px; }
.swatch.two i { background: #fff; width: 15px; height: 15px; margin: 4px auto 5px; }
.swatch.edit i { background: linear-gradient(90deg, #e43a2c, #f0dc24, #30b848, #28a8e0, #4438d8, #c43ac8, #d83048); border-color: #bbb; }
.swatch.three { width: 34px; }
.palette { display: grid; grid-template-columns: repeat(10, 13px); grid-auto-rows: 13px; gap: 1px; margin-top: 1px; }
.palette i { border: 1px solid #b4b4b4; box-shadow: inset 0 0 0 1px #f7f7f7; }
.palette i:nth-child(1) { background: #000; }
.palette i:nth-child(2) { background: #7f7f7f; }
.palette i:nth-child(3) { background: #880f18; }
.palette i:nth-child(4) { background: #fb3124; }
.palette i:nth-child(5) { background: #ff8427; }
.palette i:nth-child(6) { background: #ffe800; }
.palette i:nth-child(7) { background: #189c48; }
.palette i:nth-child(8) { background: #0a98f0; }
.palette i:nth-child(9) { background: #3f48cc; }
.palette i:nth-child(10) { background: #a450a4; }
.palette i:nth-child(11) { background: #fff; }
.palette i:nth-child(12) { background: #c3c3c6; }
.palette i:nth-child(13) { background: #bd7c58; }
.palette i:nth-child(14) { background: #ffb2c8; }
.palette i:nth-child(15) { background: #ffc20c; }
.palette i:nth-child(16) { background: #efe2ac; }
.palette i:nth-child(17) { background: #b2d41c; }
.palette i:nth-child(18) { background: #94d4ec; }
.palette i:nth-child(19) { background: #6e90c2; }
.palette i:nth-child(20) { background: #c8bfe6; }
.canvas { flex: 1; min-height: 0; position: relative; background: linear-gradient(#c5d0e2, #dbe5f4); padding: 3px; }
.share .paper { width: 767px; height: 302px; box-shadow: 3px 3px 3px #a9b7ca; }
.notes { font: 15px "Liberation Sans", sans-serif; fill: #111; }
.grip { position: absolute; width: 3px; height: 3px; border: 1px solid #555; background: #fff; }
.grip.right { left: 770px; top: 152px; }
.grip.bottom { left: 385px; top: 305px; }
.status { flex: none; height: 15px; background: #f0f0f0; display: flex; color: #333; }
.status > span { width: 97px; border-right: 1px solid #dcdcdc; display: flex; align-items: center; gap: 5px; padding-left: 3px; }
.zoom { margin-left: auto; display: flex; align-items: center; gap: 5px; padding-right: 3px; }
.zoom b { width: 9px; height: 9px; border: 1px solid #777; border-radius: 50%; line-height: 7px; text-align: center; }
.zoom input { width: 58px; height: 8px; margin: 0; appearance: none; background: linear-gradient(#ccc, #ccc) center / 100% 1px no-repeat; }
.zoom input::-webkit-slider-thumb { appearance: none; width: 6px; height: 8px; background: #0a74d4; border-radius: 0 0 3px 3px; }
.mini-bar { flex: none; height: 25px; background: linear-gradient(90deg, #22323a, #2b3437 50%, #1b262e); display: flex; justify-content: space-between; color: #eee; }
.mini-apps { display: flex; width: 337px; }
.mini-apps button { flex: 1; height: 25px; position: relative; }
.share .mini-apps svg { width: 15px; height: 15px; }
.share .mini-apps button:nth-child(-n+2) svg { width: 12px; height: 12px; }
.mini-apps .run::after { content: ""; position: absolute; left: 3px; right: 3px; bottom: 0; height: 1px; background: #76d6f6; }
.mini-apps .active { background: #536068; }
.mini-tray { display: flex; align-items: center; gap: 5px; padding-right: 14px; }
.share .mini-tray svg { width: 10px; height: 10px; }
.mini-clock { text-align: center; line-height: 11px; margin: 0 3px; }
.share .mini-tray .mini-note { width: 13px; height: 13px; }
.sharing { position: absolute; right: 25px; bottom: 34px; width: 242px; height: 27px; background: #fff; border: 1px solid #d4d4d4; box-shadow: 0 1px 3px #8888; display: flex; align-items: center; padding: 0 6px; color: #333; }
.bars { width: 4px; height: 8px; border: 1px solid #ccc; border-width: 0 1px; margin-right: 6px; }
.msg { flex: 1; white-space: nowrap; }
.sharing button { width: 63px; height: 20px; border-radius: 2px; background: #1a73e8; color: #fff; font-weight: 700; margin-right: 6px; }
.sharing a { color: #1a66c8; text-decoration: none; }
.activate-en { position: absolute; left: 670px; top: 405px; font-size: 12px; line-height: 16px; color: #9aa0a8; opacity: .8; white-space: nowrap; }
.activate-en small { display: block; font-size: 9px; line-height: 12px; }

/* meeting controls */
.actions { flex: none; position: relative; height: 64px; display: flex; align-items: center; padding: 0 22px 0 32px; }
.act { display: flex; gap: 21px; }
.act.left { flex: 342 1 0; }
.act.right { flex: 289 1 0; justify-content: flex-end; }
.act button { width: 42px; height: 42px; border-radius: 50%; background: #0f70d7; position: relative; }
.act button.ring { background: none; border: 3px solid #fff; }
.act svg { width: 20px; height: 20px; }
.act .caret { position: absolute; left: -5px; bottom: -2px; width: 18px; height: 18px; border: 2px solid #06172a; border-radius: 50%; background: #fff; display: flex; align-items: center; justify-content: center; }
.act .caret svg { width: 10px; height: 10px; }
.act .mic { color: #d4e4f7; }
.activate-ar { position: absolute; left: 64px; width: 240px; top: -14px; font: 20px/24px "Open Sans", "DejaVu Sans Condensed", "DejaVu Sans", sans-serif; color: #fff; opacity: .5; white-space: nowrap; }
.activate-ar small { display: block; font-size: 16px; line-height: 22px; }

/* chat */
.chat-head { flex: none; height: 58px; display: flex; align-items: center; padding: 0 16px 8px 16px; gap: 9px; }
.chat-head svg { width: 10px; height: 14px; }
.chat-head h2 { font-size: 11px; flex: 1; color: #1d2a38; }
.chat-head button svg { width: 16px; height: 16px; }
.chat-body { flex: 1; min-height: 0; display: flex; padding-right: 14px; background: radial-gradient(ellipse at 50% 0, #0003, transparent 70%) center top / 80% 12px no-repeat; }
.list { order: 2; flex: 1; min-width: 0; overflow: hidden; display: flex; flex-direction: column; justify-content: flex-end; gap: 10px; padding: 0 0 8px 28px; }
.scroll { order: 1; width: 5px; border-radius: 3px; background: #c1c1c1; padding-top: 90px; }
.scroll i { display: block; height: 100%; border-radius: 3px; background: #8f8f8f; }
article { flex: none; display: flex; gap: 7px; padding-right: 2px; }
article:first-child { height: 45px; align-items: flex-end; }
article:first-child .ava { margin: 0 0 10px; }
article > div { flex: 1; min-width: 0; font-size: 13px; font-weight: 700; }
.ava { flex: none; position: relative; width: 31px; height: 31px; border-radius: 5px; background: #01579b; color: #fff; display: flex; align-items: center; justify-content: center; font-weight: 700; font-size: 12px; }
article .ava { margin-top: 4px; }
h3 { font-size: 13px; line-height: 24px; height: 24px; margin-bottom: 1px; font-weight: 500; display: flex; gap: 7px; }
article a, .plain { display: block; }
time { font-size: 10px; font-weight: 400; color: #6b7683; display: flex; gap: 1px; }
.taskbar time { display: block; }
.chat article a { color: #1a73d9; }
.plain { color: #4e5a66; }
.box { flex: none; border: 1px solid #c3cdd6; border-radius: 3px; background: #fafbfd; padding: 13px 14px 14px; margin-top: 4px; font-size: 13px; font-weight: 500; }
.box.ar { font-size: 10px; font-weight: 700; padding: 13px 14px 15px 0; margin-top: 5px; white-space: nowrap; }
.box a { color: inherit; }
.composer { flex: none; display: flex; align-items: center; height: 70px; padding: 0 13px 0 14px; gap: 9px; }
.composer input { flex: 1; min-width: 0; height: 39px; border: 2px solid #a7b3bd; border-radius: 4px; background: #fff; padding: 0 13px; font: 12px "DejaVu Sans Condensed", "DejaVu Sans", sans-serif; }
.composer input::placeholder { color: #66727e; }
.composer button { width: 35px; height: 35px; border-radius: 50%; background: #0f70d7; }
.composer svg { width: 18px; height: 18px; }

/* participants */
.brand { height: 50px; border-bottom: 1px solid #a7b9c6; display: flex; align-items: center; justify-content: center; }
.brand svg { width: 34px; height: 30px; }
.side h2 { font-size: 9px; font-weight: 700; line-height: 20px; height: 20px; color: #4e5a66; padding: 0 10px; }
.brand + h2 { margin-top: 15px; }
.nav { height: 40px; margin: 10px 0 11px; display: flex; align-items: center; padding-right: 16px; gap: 18px; color: #1d2a38; text-decoration: none; font-size: 11px; }
.nav svg { width: 26px; height: 26px; }
.users-head { height: 20px; display: flex; justify-content: space-between; align-items: center; padding-left: 6px; }
.users-head .lat { font-size: 11px; }
.users-head svg { width: 15px; height: 15px; }
.users { padding: 27px 14px 0 0; display: flex; flex-direction: column; gap: 30px; }
.users li { height: 31px; display: flex; align-items: center; gap: 11px; }
.users div { font-size: 10px; line-height: 16px; color: #1d2a38; }
.users small { display: block; font-size: 10px; line-height: 14px; color: #66727e; }
.users b.ar { font-size: 10px; }
.navy { background: #1a237e; }
.violet { background: #4a148c; }
.grape { background: #6a1b9a; }
.iris { background: #5e35b1; }
.azure { background: #0277bd; }
.badge { position: absolute; left: -6px; bottom: -6px; width: 16px; height: 16px; border-radius: 50%; background: #088080; border: 1px solid #f1f5f9; display: flex; align-items: center; justify-content: center; }
.badge.red { background: #df2721; }
.badge.none { background: #f1f5f9; }
.badge svg { width: 11px; height: 11px; }
.badge .slash { position: absolute; }
.badge.top { left: auto; right: -2px; bottom: auto; top: -2px; width: 14px; height: 14px; border-radius: 4px; background: #0f70d7; }

/* desktop taskbar */
.taskbar { flex: none; height: 40px; display: flex; align-items: center; background: #1c1c1c; color: #fff; padding: 0 4px; font: 12px/17px "Open Sans", "DejaVu Sans", sans-serif; gap: 6px; }
.notif { width: 40px; height: 40px; background: #2b2b2b; margin-left: 9px; }
.notif svg { width: 20px; height: 20px; }
.taskbar time { width: 44px; color: #fff; font: 10px/17px "DejaVu Sans", sans-serif; text-align: center; }
.lang { margin: 0 1px; }
.kbd { width: 24px; height: 14px; }
.weather { display: flex; align-items: center; gap: 8px; margin-left: 23px; font-size: 14px; }
.weather svg { width: 24px; height: 24px; }
.weather .ar { font-size: 13px; }
.apps { margin-left: auto; display: flex; gap: 9px; }
.apps button { width: 40px; height: 40px; border-bottom: 2px solid transparent; }
.apps .run { border-color: #76b9ed; }
.apps svg { width: 24px; height: 24px; }
.apps button:nth-last-child(-n+2) svg { width: 18px; height: 18px; }
```
